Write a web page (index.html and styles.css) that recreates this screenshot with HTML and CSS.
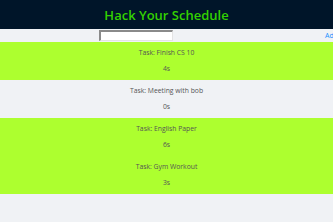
FILE: index.html
```html
<!DOCTYPE html>
<html>
<head>
<meta charset="utf-8">
<link rel="stylesheet" href="styles.css">
</head>
<body>
<header class="header"><h1 class="title">Hack Your Schedule</h1></header>
<div class="toolbar">
  <input class="task-input" type="text">
  <a class="add-link" href="#">Add</a>
</div>
<div class="list">
  <div class="group active">
    <div class="task"><p class="line">Task: Finish CS 10</p><p class="line">4s</p></div>
  </div>
  <div class="group">
    <div class="task"><p class="line">Task: Meeting with bob</p><p class="line">0s</p></div>
  </div>
  <div class="group active">
    <div class="task"><p class="line">Task: English Paper</p><p class="line">6s</p></div>
    <div class="task"><p class="line">Task: Gym Workout</p><p class="line">3s</p></div>
  </div>
</div>
</body>
</html>
```
FILE: styles.css
```css
html, body { margin: 0; padding: 0; }
body {
  width: 333px;
  height: 222px;
  overflow: hidden;
  background: #f0f2f5;
  font-family: "Open Sans", "Noto Sans", sans-serif;
}
.header {
  background: #001529;
  height: 29px;
  display: flex;
  align-items: center;
  justify-content: center;
}
.title {
  margin: 0;
  color: #33d100;
  font-size: 13px;
  font-weight: 600;
  line-height: 1;
  padding-top: 1px;
}
.toolbar {
  height: 13px;
  display: flex;
  align-items: center;
  padding-left: 99px;
}
.task-input {
  width: 71px;
  height: 8px;
  margin: 0;
  padding: 0;
  border: 2px solid #8a8a8a;
  border-right: 1px solid #e4e4e4;
  border-bottom: 1px solid #e4e4e4;
  background: #fff;
}
.add-link {
  margin-left: auto;
  margin-right: -8px;
  color: #1890ff;
  font-size: 7px;
  text-decoration: none;
  width: 16px;
}
.list { display: flex; flex-direction: column; }
.group.active { background: #adff2f; }
.task {
  height: 38px;
  padding-top: 5px;
  box-sizing: border-box;
  display: flex;
  flex-direction: column;
  align-items: center;
  gap: 5px;
}
.line {
  margin: 0;
  font-size: 6.8px;
  line-height: 11px;
  color: #555;
}
```
